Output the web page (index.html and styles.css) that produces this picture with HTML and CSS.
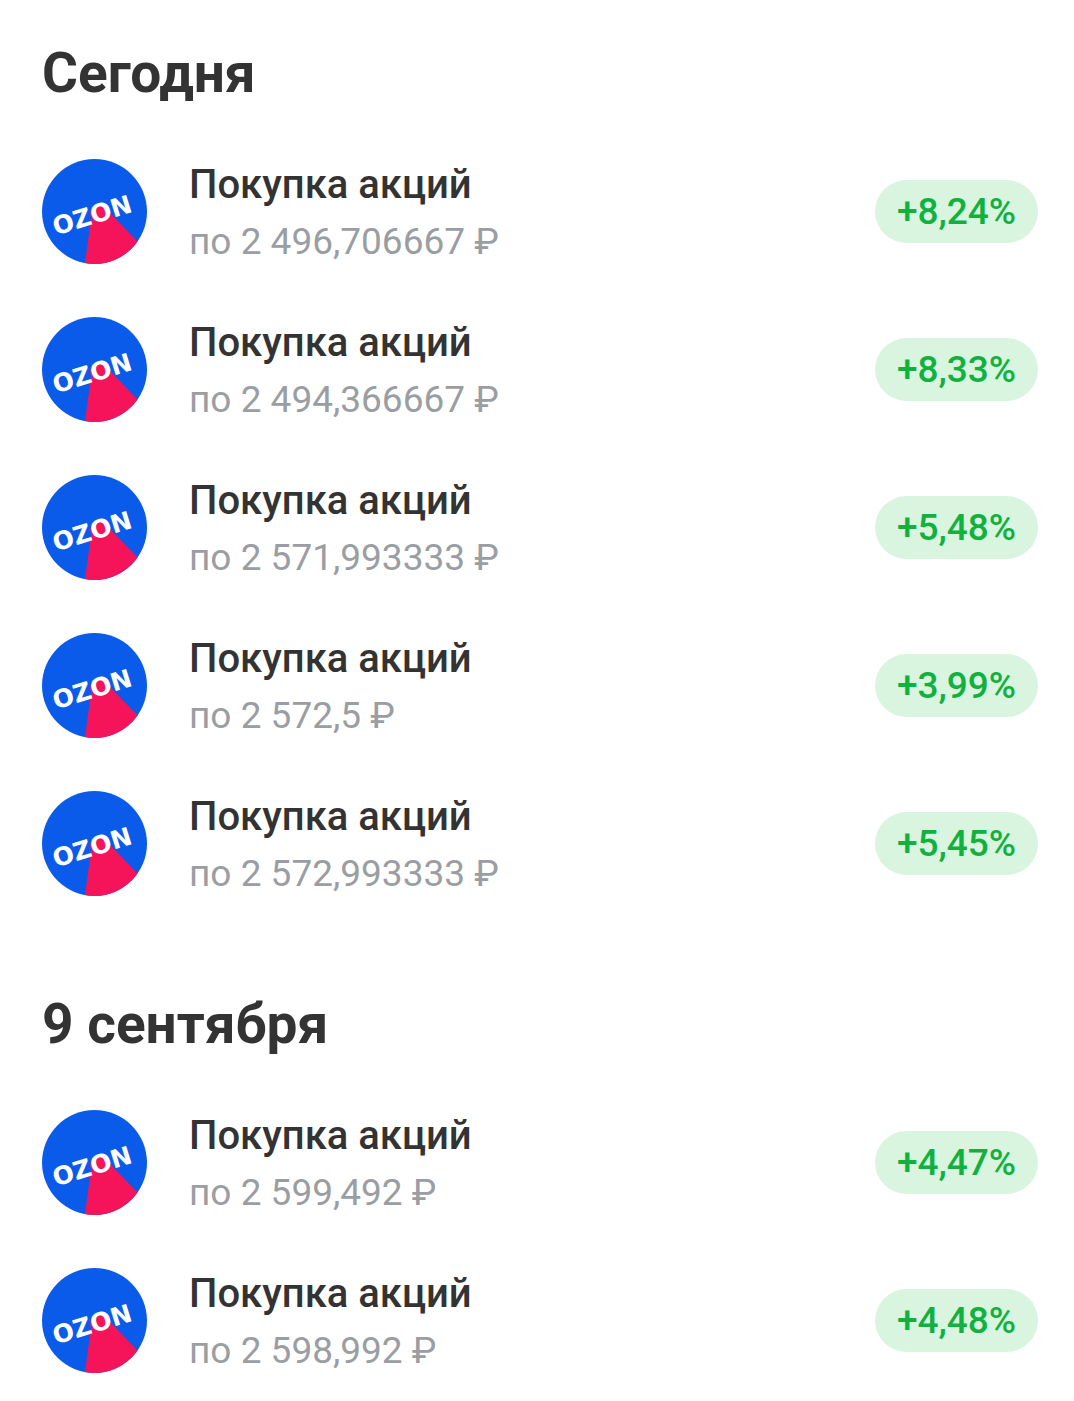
FILE: index.html
```html
<!DOCTYPE html>
<html lang="ru">
<head>
    <meta charset="UTF-8">
    <meta name="viewport" content="width=device-width, initial-scale=1.0">
    <title>Сделки</title>
    <link rel="stylesheet" href="styles.css">
</head>
<body>
    <section class="day">
        <h2 class="day-title">Сегодня</h2>
        <div class="deal">
            <svg class="logo" viewBox="0 0 105 105">
                <circle cx="52.5" cy="52.5" r="52.5" fill="#0b5bea"/>
                <path d="M49 60 L68 54 L95.5 82.6 A52.5 52.5 0 0 1 43 104.1 Z" fill="#f5145a"/>
                <ellipse cx="57" cy="54" rx="9" ry="7" transform="rotate(-17 57 54)" fill="#f5145a"/>
                <text class="logo-text" x="50" y="65" text-anchor="middle" transform="rotate(-17 50 56)">OZON</text>
            </svg>
            <div class="deal-info">
                <div class="deal-name">Покупка акций</div>
                <div class="deal-price">по 2 496,706667 ₽</div>
            </div>
            <span class="badge">+8,24%</span>
        </div>
        <div class="deal">
            <svg class="logo" viewBox="0 0 105 105">
                <circle cx="52.5" cy="52.5" r="52.5" fill="#0b5bea"/>
                <path d="M49 60 L68 54 L95.5 82.6 A52.5 52.5 0 0 1 43 104.1 Z" fill="#f5145a"/>
                <ellipse cx="57" cy="54" rx="9" ry="7" transform="rotate(-17 57 54)" fill="#f5145a"/>
                <text class="logo-text" x="50" y="65" text-anchor="middle" transform="rotate(-17 50 56)">OZON</text>
            </svg>
            <div class="deal-info">
                <div class="deal-name">Покупка акций</div>
                <div class="deal-price">по 2 494,366667 ₽</div>
            </div>
            <span class="badge">+8,33%</span>
        </div>
        <div class="deal">
            <svg class="logo" viewBox="0 0 105 105">
                <circle cx="52.5" cy="52.5" r="52.5" fill="#0b5bea"/>
                <path d="M49 60 L68 54 L95.5 82.6 A52.5 52.5 0 0 1 43 104.1 Z" fill="#f5145a"/>
                <ellipse cx="57" cy="54" rx="9" ry="7" transform="rotate(-17 57 54)" fill="#f5145a"/>
                <text class="logo-text" x="50" y="65" text-anchor="middle" transform="rotate(-17 50 56)">OZON</text>
            </svg>
            <div class="deal-info">
                <div class="deal-name">Покупка акций</div>
                <div class="deal-price">по 2 571,993333 ₽</div>
            </div>
            <span class="badge">+5,48%</span>
        </div>
        <div class="deal">
            <svg class="logo" viewBox="0 0 105 105">
                <circle cx="52.5" cy="52.5" r="52.5" fill="#0b5bea"/>
                <path d="M49 60 L68 54 L95.5 82.6 A52.5 52.5 0 0 1 43 104.1 Z" fill="#f5145a"/>
                <ellipse cx="57" cy="54" rx="9" ry="7" transform="rotate(-17 57 54)" fill="#f5145a"/>
                <text class="logo-text" x="50" y="65" text-anchor="middle" transform="rotate(-17 50 56)">OZON</text>
            </svg>
            <div class="deal-info">
                <div class="deal-name">Покупка акций</div>
                <div class="deal-price">по 2 572,5 ₽</div>
            </div>
            <span class="badge">+3,99%</span>
        </div>
        <div class="deal">
            <svg class="logo" viewBox="0 0 105 105">
                <circle cx="52.5" cy="52.5" r="52.5" fill="#0b5bea"/>
                <path d="M49 60 L68 54 L95.5 82.6 A52.5 52.5 0 0 1 43 104.1 Z" fill="#f5145a"/>
                <ellipse cx="57" cy="54" rx="9" ry="7" transform="rotate(-17 57 54)" fill="#f5145a"/>
                <text class="logo-text" x="50" y="65" text-anchor="middle" transform="rotate(-17 50 56)">OZON</text>
            </svg>
            <div class="deal-info">
                <div class="deal-name">Покупка акций</div>
                <div class="deal-price">по 2 572,993333 ₽</div>
            </div>
            <span class="badge">+5,45%</span>
        </div>
    </section>

    <section class="day">
        <h2 class="day-title">9 сентября</h2>
        <div class="deal">
            <svg class="logo" viewBox="0 0 105 105">
                <circle cx="52.5" cy="52.5" r="52.5" fill="#0b5bea"/>
                <path d="M49 60 L68 54 L95.5 82.6 A52.5 52.5 0 0 1 43 104.1 Z" fill="#f5145a"/>
                <ellipse cx="57" cy="54" rx="9" ry="7" transform="rotate(-17 57 54)" fill="#f5145a"/>
                <text class="logo-text" x="50" y="65" text-anchor="middle" transform="rotate(-17 50 56)">OZON</text>
            </svg>
            <div class="deal-info">
                <div class="deal-name">Покупка акций</div>
                <div class="deal-price">по 2 599,492 ₽</div>
            </div>
            <span class="badge">+4,47%</span>
        </div>
        <div class="deal">
            <svg class="logo" viewBox="0 0 105 105">
                <circle cx="52.5" cy="52.5" r="52.5" fill="#0b5bea"/>
                <path d="M49 60 L68 54 L95.5 82.6 A52.5 52.5 0 0 1 43 104.1 Z" fill="#f5145a"/>
                <ellipse cx="57" cy="54" rx="9" ry="7" transform="rotate(-17 57 54)" fill="#f5145a"/>
                <text class="logo-text" x="50" y="65" text-anchor="middle" transform="rotate(-17 50 56)">OZON</text>
            </svg>
            <div class="deal-info">
                <div class="deal-name">Покупка акций</div>
                <div class="deal-price">по 2 598,992 ₽</div>
            </div>
            <span class="badge">+4,48%</span>
        </div>
    </section>
</body>
</html>
```

FILE: styles.css
```css
body {
    margin: 0;
    background: #fff;
    font-family: Roboto, "Noto Sans", sans-serif;
    height: 1401px;
    overflow: hidden;
    padding: 0 36px 0 42px;
}
.day {
    display: flex;
    flex-direction: column;
    gap: 53px;
    padding-top: 40px;
    padding-bottom: 55px;
}
.day-title {
    margin: 0;
    font-size: 55px;
    line-height: 66px;
    font-weight: 700;
    color: #333333;
}
.deal {
    display: flex;
    align-items: center;
    height: 105px;
}
.logo {
    width: 105px;
    height: 105px;
    flex: none;
}
.logo-text {
    font-family: "DejaVu Sans", sans-serif;
    font-weight: 700;
    font-size: 25px;
    fill: #fff;
}
.deal-info {
    flex: 1;
    margin-left: 42px;
    padding-top: 2px;
}
.deal-name {
    font-size: 40px;
    font-weight: 500;
    line-height: 57px;
    color: #333333;
}
.deal-price {
    font-size: 37px;
    line-height: 57px;
    color: #9a9ea3;
}
.badge {
    display: flex;
    align-items: center;
    justify-content: center;
    width: 163px;
    height: 63px;
    border-radius: 32px;
    background: #d9f5e0;
    color: #10b13f;
    font-size: 37px;
    font-weight: 500;
}
```
